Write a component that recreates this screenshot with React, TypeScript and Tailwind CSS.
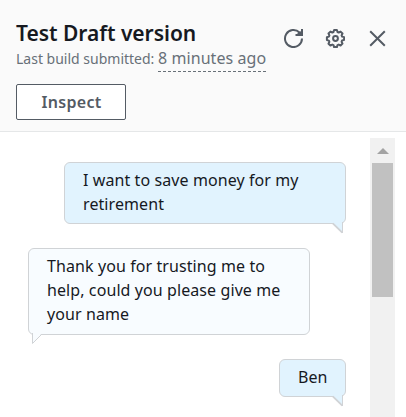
import type { ReactNode } from "react";

function Tail({ side }: { side: "left" | "right" }) {
  return side === "right" ? (
    <svg className="absolute right-0 -bottom-[11px]" width="16" height="16" viewBox="0 0 16 16">
      <path d="M3 4H14L13.500 14L4 5Z" fill="#e1f3fe" />
      <path d="M13.500 4V15" stroke="#d0d3d6" />
      <path d="M3.800 5.300L13.300 14.700" stroke="#d0d3d6" strokeWidth="1.800" />
    </svg>
  ) : (
    <svg className="absolute left-0 -bottom-[11px]" width="16" height="16" viewBox="0 0 16 16">
      <path d="M3 3.500H13.500L4 14Z" fill="#f8fcff" />
      <path d="M3.500 4V14.500L12.700 5.300" fill="none" stroke="#d0d3d6" />
    </svg>
  );
}

function Bubble({ side, size, children }: { side: "left" | "right"; size: string; children: ReactNode }) {
  const look = side === "right" ? "self-end bg-[#e1f3fe]" : "self-start bg-[#f8fcff]";
  return (
    <div
      className={`relative rounded-md border border-[#d0d3d6] pt-[5px] pl-[18px] text-base leading-6 tracking-[0.09px] whitespace-nowrap ${look} ${size}`}
    >
      {children}
      <Tail side={side} />
    </div>
  );
}

export default function App() {
  return (
    <div className="flex h-[417px] w-[406px] flex-col overflow-hidden bg-white font-['Noto_Sans',sans-serif] text-[#16191f]">
      <header className="flex h-[132px] shrink-0 justify-between border-b border-[#e5e7e8] bg-[#fafafa] pt-[18px] pr-[19px] pl-4">
        <div className="flex flex-col items-start whitespace-nowrap">
          <h1 className="h-[29px] text-[21px] leading-[30px] font-semibold tracking-[-0.03px]">Test Draft version</h1>
          <div className="flex h-[25px] items-start text-[#687078]">
            <span className="w-[142px] text-[14px] leading-6">Last build submitted:</span>
            <span className="h-[25px] w-[108px] border-b border-dashed border-[#687078] text-base leading-[22px] tracking-[0.07px]">8 minutes ago</span>
          </div>
          <button className="mt-3 h-9 w-[110px] rounded-[2px] border border-[#545b64] bg-white pl-px text-base leading-[32px] font-semibold tracking-[0.3px] text-[#545b64]">
            Inspect
          </button>
        </div>
        <div className="flex gap-[22px] pt-[10px] text-[#545b64]">
          <svg width="20" height="20" viewBox="0 0 20 20" fill="none" stroke="currentColor" strokeWidth="2">
            <path d="M19 10.500A8.500 8.500 0 1 1 16.500 4.500L18 6" />
            <path d="M19 1V7H12.500" />
            <path d="M15 4.500L18.500 3V6.500H14Z" fill="currentColor" stroke="none" />
          </svg>
          <svg width="20" height="20" viewBox="0 0 20 20" fill="none" stroke="currentColor" strokeWidth="2" strokeLinejoin="round">
            <g transform="translate(0.5 0.5)">
              <path d="M8.600 1.500h2.800l.6 2 1.200.5 1.900-.9 1.900 1.900-.9 1.900.5 1.200 2 .5v2.800l-2 .6-.5 1.200.9 1.900-1.900 1.900-1.900-.9-1.200.5-.6 2H8.600l-.6-2-1.200-.5-1.900.9L3 15.200l.9-1.900-.5-1.200-2-.6V8.700l2-.6.5-1.200L3 5l1.900-1.900 1.900.9L8 3.500Z" />
              <circle cx="10" cy="10" r="2.400" />
            </g>
          </svg>
          <svg width="20" height="20" viewBox="0 0 20 20" fill="none" stroke="currentColor" strokeWidth="2">
            <path d="M3.200 3.200L17.800 17.800M17.800 3.200L3.200 17.800" />
          </svg>
        </div>
      </header>
      <main className="flex min-h-0 flex-1 pt-[6px] pr-[11px]">
        <div className="flex flex-1 flex-col gap-6 pt-6 pr-6 pl-7">
          <Bubble side="right" size="h-[62px] w-[282px]">
            <div>I want to save money for my</div>
            <div>retirement</div>
          </Bubble>
          <Bubble side="left" size="h-[87px] w-[282px]">
            <div>Thank you for trusting me to</div>
            <div>help, could you please give me</div>
            <div>your name</div>
          </Bubble>
          <Bubble side="right" size="h-[38px] w-[67px]">
            <div>Ben</div>
          </Bubble>
        </div>
        <div className="flex w-[25px] flex-col items-center bg-[#f1f1f1]">
          <div className="flex h-[25px] items-center justify-center pt-[1px]">
            <svg width="12" height="6" viewBox="0 0 12 6"><path d="M0 6L6 0L12 6Z" fill="#a3a3a3" /></svg>
          </div>
          <div className="h-[134px] w-[21px] bg-[#c1c1c1]" />
        </div>
      </main>
    </div>
  );
}
